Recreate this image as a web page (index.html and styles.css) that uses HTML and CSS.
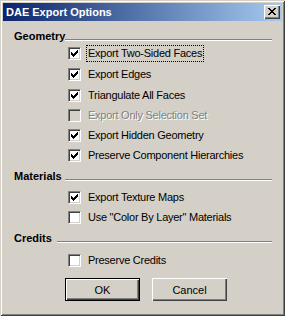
FILE: index.html
```html
<!DOCTYPE html>
<html lang="en">
<head>
    <meta charset="UTF-8">
    <title>DAE Export Options</title>
    <link rel="stylesheet" href="styles.css">
</head>
<body>
    <div class="window">
        <div class="titlebar">
            <span class="title">DAE Export Options</span>
            <div class="close-btn">
                <svg width="8" height="7" viewBox="0 0 8 7" shape-rendering="crispEdges">
                    <path d="M0 0h2v1h-2z M6 0h2v1h-2z M1 1h2v1h-2z M5 1h2v1h-2z M2 2h4v1h-4z M3 3h2v1h-2z M2 4h4v1h-4z M1 5h2v1h-2z M5 5h2v1h-2z M0 6h2v1h-2z M6 6h2v1h-2z" fill="#000"/>
                </svg>
            </div>
        </div>

        <div class="content">
            <div class="heading heading-geometry">
                <span class="heading-label">Geometry</span>
                <div class="etched"></div>
            </div>
            <div class="rows rows-geometry">
                <div class="row">
                    <div class="checkbox checked"><svg width="7" height="7" viewBox="0 0 7 7" shape-rendering="crispEdges"><path d="M6 0h1v1h-1z M5 1h2v1h-2z M0 2h1v1h-1z M4 2h3v1h-3z M0 3h2v1h-2z M3 3h3v1h-3z M0 4h5v1h-5z M1 5h3v1h-3z M2 6h1v1h-1z"/></svg></div>
                    <span class="label focused">Export Two-Sided Faces</span>
                </div>
                <div class="row">
                    <div class="checkbox checked"><svg width="7" height="7" viewBox="0 0 7 7" shape-rendering="crispEdges"><path d="M6 0h1v1h-1z M5 1h2v1h-2z M0 2h1v1h-1z M4 2h3v1h-3z M0 3h2v1h-2z M3 3h3v1h-3z M0 4h5v1h-5z M1 5h3v1h-3z M2 6h1v1h-1z"/></svg></div>
                    <span class="label">Export Edges</span>
                </div>
                <div class="row">
                    <div class="checkbox checked"><svg width="7" height="7" viewBox="0 0 7 7" shape-rendering="crispEdges"><path d="M6 0h1v1h-1z M5 1h2v1h-2z M0 2h1v1h-1z M4 2h3v1h-3z M0 3h2v1h-2z M3 3h3v1h-3z M0 4h5v1h-5z M1 5h3v1h-3z M2 6h1v1h-1z"/></svg></div>
                    <span class="label">Triangulate All Faces</span>
                </div>
                <div class="row row-tight">
                    <div class="checkbox disabled"></div>
                    <span class="label disabled-text">Export Only Selection Set</span>
                </div>
                <div class="row row-tight">
                    <div class="checkbox checked"><svg width="7" height="7" viewBox="0 0 7 7" shape-rendering="crispEdges"><path d="M6 0h1v1h-1z M5 1h2v1h-2z M0 2h1v1h-1z M4 2h3v1h-3z M0 3h2v1h-2z M3 3h3v1h-3z M0 4h5v1h-5z M1 5h3v1h-3z M2 6h1v1h-1z"/></svg></div>
                    <span class="label">Export Hidden Geometry</span>
                </div>
                <div class="row row-tight">
                    <div class="checkbox checked"><svg width="7" height="7" viewBox="0 0 7 7" shape-rendering="crispEdges"><path d="M6 0h1v1h-1z M5 1h2v1h-2z M0 2h1v1h-1z M4 2h3v1h-3z M0 3h2v1h-2z M3 3h3v1h-3z M0 4h5v1h-5z M1 5h3v1h-3z M2 6h1v1h-1z"/></svg></div>
                    <span class="label">Preserve Component Hierarchies</span>
                </div>
            </div>

            <div class="heading">
                <span class="heading-label">Materials</span>
                <div class="etched"></div>
            </div>
            <div class="rows">
                <div class="row">
                    <div class="checkbox checked"><svg width="7" height="7" viewBox="0 0 7 7" shape-rendering="crispEdges"><path d="M6 0h1v1h-1z M5 1h2v1h-2z M0 2h1v1h-1z M4 2h3v1h-3z M0 3h2v1h-2z M3 3h3v1h-3z M0 4h5v1h-5z M1 5h3v1h-3z M2 6h1v1h-1z"/></svg></div>
                    <span class="label">Export Texture Maps</span>
                </div>
                <div class="row row-tight">
                    <div class="checkbox"></div>
                    <span class="label">Use "Color By Layer" Materials</span>
                </div>
            </div>

            <div class="heading heading-credits">
                <span class="heading-label">Credits</span>
                <div class="etched"></div>
            </div>
            <div class="rows rows-credits">
                <div class="row">
                    <div class="checkbox"></div>
                    <span class="label">Preserve Credits</span>
                </div>
            </div>

            <div class="buttons">
                <div class="button default"><span>OK</span></div>
                <div class="button"><span>Cancel</span></div>
            </div>
        </div>
    </div>
</body>
</html>
```

FILE: styles.css
```css
body {
    margin: 0;
    background: #d4d0c8;
    font-family: "Liberation Sans", Arial, sans-serif;
    font-size: 11px;
    color: #000;
}

.window {
    width: 285px;
    height: 316px;
    box-sizing: border-box;
    padding: 3px;
    background: #d4d0c8;
    box-shadow: inset 1px 1px #d4d0c8, inset -1px -1px #404040,
                inset 2px 2px #fff, inset -2px -2px #808080;
    display: flex;
    flex-direction: column;
}

.titlebar {
    height: 18px;
    background: linear-gradient(to right, #0a246a, #a6caf0);
    display: flex;
    align-items: center;
    justify-content: space-between;
    padding: 0 2px 0 2px;
}

.title {
    color: #fff;
    font-weight: bold;
    line-height: 18px;
    padding-left: 1px;
}

.close-btn {
    width: 16px;
    height: 14px;
    box-sizing: border-box;
    background: #d4d0c8;
    box-shadow: inset 1px 1px #fff, inset -1px -1px #404040, inset -2px -2px #808080;
    display: flex;
    align-items: center;
    justify-content: center;
    padding: 0 1px 1px 0;
}

.close-btn svg {
    display: block;
}

.content {
    display: flex;
    flex-direction: column;
}

.heading {
    display: flex;
    align-items: flex-end;
    height: 13px;
    margin-top: 8px;
    padding-left: 11px;
    padding-right: 10px;
}

.heading-geometry {
    margin-top: 9px;
}

.heading-label {
    font-weight: bold;
    line-height: 13px;
    width: 51px;
    flex: none;
    white-space: nowrap;
}

.heading-credits .heading-label {
    width: 43px;
}

.etched {
    flex: 1;
    height: 0;
    border-top: 1px solid #808080;
    border-bottom: 1px solid #fff;
    margin-bottom: 2px;
}

.rows {
    display: flex;
    flex-direction: column;
    gap: 7px;
    margin-top: 8px;
    padding-left: 65px;
}

.rows-geometry {
    margin-top: 4px;
    gap: 8px;
}

.rows-geometry .row-tight {
    margin-top: -1px;
}

.rows-credits {
    margin-top: 9px;
}

.row {
    display: flex;
    align-items: center;
    height: 13px;
}

.rows .row-tight:first-child {
    margin-top: 0;
}

.checkbox {
    width: 13px;
    height: 13px;
    box-sizing: border-box;
    flex: none;
    background: #fff;
    border-top: 1px solid #808080;
    border-left: 1px solid #808080;
    border-bottom: 1px solid #fff;
    border-right: 1px solid #fff;
    box-shadow: inset 1px 1px #404040, inset -1px -1px #d4d0c8;
    padding: 2px;
}

.checkbox svg {
    display: block;
}

.checkbox.disabled {
    background: #d4d0c8;
}

.label {
    margin-left: 5px;
    line-height: 13px;
    padding: 1px 1px;
    border: 1px solid transparent;
    white-space: nowrap;
    letter-spacing: -0.25px;
}

.label.focused {
    border: 1px dotted #000;
}

.disabled-text {
    color: #808080;
    text-shadow: 1px 1px #fff;
}

.buttons {
    display: flex;
    gap: 12px;
    margin-top: 11px;
    padding-left: 62px;
}

.button {
    width: 75px;
    height: 23px;
    box-sizing: border-box;
    background: #d4d0c8;
    box-shadow: inset 1px 1px #fff, inset -1px -1px #404040, inset -2px -2px #808080;
    display: flex;
    align-items: center;
    justify-content: center;
}

.button.default {
    border: 1px solid #000;
}
```
